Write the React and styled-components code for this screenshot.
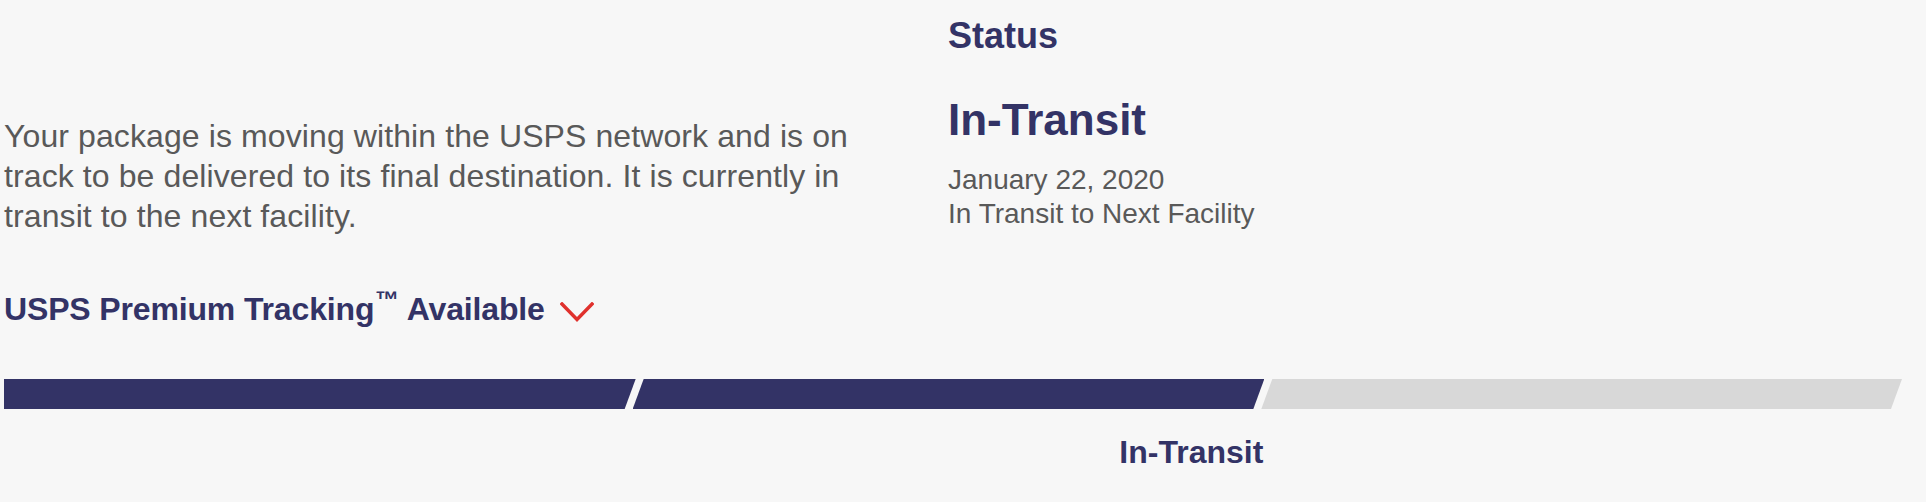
import React from "react";
import styled, { createGlobalStyle } from "styled-components";

const GlobalStyle = createGlobalStyle`
  html, body {
    margin: 0;
    padding: 0;
    background: #f7f7f7;
  }
  body {
    font-family: "Liberation Sans", Arial, Helvetica, sans-serif;
  }
`;

const NAVY = "#333366";
const GRAY_TEXT = "#595959";

const Page = styled.main`
  padding: 0 24px 0 4px;
  color: ${GRAY_TEXT};
`;

const Summary = styled.section`
  display: grid;
  grid-template-columns: 944px 1fr;
  align-items: start;
`;

const Description = styled.div`
  padding-top: 116px;
`;

const Message = styled.p`
  margin: 0;
  max-width: 880px;
  font-size: 32px;
  line-height: 40px;
  letter-spacing: 0.1px;
  color: ${GRAY_TEXT};
`;

const PremiumToggle = styled.button`
  display: flex;
  align-items: flex-start;
  gap: 15px;
  margin-top: 57px;
  padding: 0;
  border: 0;
  background: none;
  font-family: inherit;
  font-size: 32px;
  font-weight: 700;
  line-height: 32px;
  letter-spacing: -0.15px;
  color: ${NAVY};
  text-align: left;
  cursor: pointer;
`;

const Trademark = styled.span`
  font-size: 24px;
  line-height: 0;
  vertical-align: 12px;
  margin-left: 1px;
`;

const Chevron = styled.svg`
  flex: none;
  margin-top: 9px;
`;

const StatusPanel = styled.div`
  padding-top: 18px;
`;

const PanelLabel = styled.h3`
  margin: 0;
  font-size: 36px;
  line-height: 36px;
  font-weight: 700;
  color: ${NAVY};
`;

const StatusTitle = styled.h2`
  margin: 44px 0 0;
  font-size: 44px;
  line-height: 44px;
  font-weight: 700;
  color: ${NAVY};
`;

const Details = styled.div`
  margin-top: 21px;
  font-size: 28px;
  line-height: 34px;
  color: ${GRAY_TEXT};
`;

const DetailLine = styled.div``;

const Progress = styled.div`
  display: flex;
  height: 30px;
  margin-top: 54px;
`;

const FIRST_CLIP = "polygon(0 0, 100% 0, calc(100% - 11px) 100%, 0 100%)";
const MID_CLIP = "polygon(11px 0, 100% 0, calc(100% - 11px) 100%, 0 100%)";

const Segment = styled.div`
  flex: ${(p) => p.$grow} 1 0;
  margin-left: ${(p) => (p.$first ? "0" : "-3px")};
  background: ${(p) => (p.$done ? NAVY : "#d8d8d8")};
  clip-path: ${(p) => (p.$first ? FIRST_CLIP : MID_CLIP)};
`;

const Steps = styled.div`
  display: flex;
  margin-top: 27px;
`;

const Step = styled.div`
  flex: ${(p) => p.$grow} 1 0;
  margin-left: ${(p) => (p.$first ? "0" : "-3px")};
  padding-right: 1px;
  text-align: right;
  font-size: 32px;
  line-height: 32px;
  font-weight: 700;
  color: ${NAVY};
`;

const steps = [
  { label: "", done: true, grow: 631 },
  { label: "In-Transit", done: true, grow: 631 },
  { label: "", done: false, grow: 640 },
];

export default function App() {
  return (
    <>
      <GlobalStyle />
      <Page>
        <Summary>
          <Description>
            <Message>
              Your package is moving within the USPS network and is on track to
              be delivered to its final destination. It is currently in transit
              to the next facility.
            </Message>
            <PremiumToggle type="button">
              <span>
                USPS Premium Tracking<Trademark>™</Trademark> Available
              </span>
              <Chevron width="34" height="20" viewBox="0 0 34 20" aria-hidden="true">
                <polyline
                  points="2,2 17,17.5 32,2"
                  fill="none"
                  stroke="#e0312d"
                  strokeWidth="3.4"
                  strokeLinecap="square"
                  strokeLinejoin="miter"
                />
              </Chevron>
            </PremiumToggle>
          </Description>
          <StatusPanel>
            <PanelLabel>Status</PanelLabel>
            <StatusTitle>In-Transit</StatusTitle>
            <Details>
              <DetailLine>January 22, 2020</DetailLine>
              <DetailLine>In Transit to Next Facility</DetailLine>
            </Details>
          </StatusPanel>
        </Summary>
        <Progress>
          {steps.map((s, i) => (
            <Segment key={i} $first={i === 0} $done={s.done} $grow={s.grow} />
          ))}
        </Progress>
        <Steps>
          {steps.map((s, i) => (
            <Step key={i} $first={i === 0} $grow={s.grow}>
              {s.label}
            </Step>
          ))}
        </Steps>
      </Page>
    </>
  );
}
